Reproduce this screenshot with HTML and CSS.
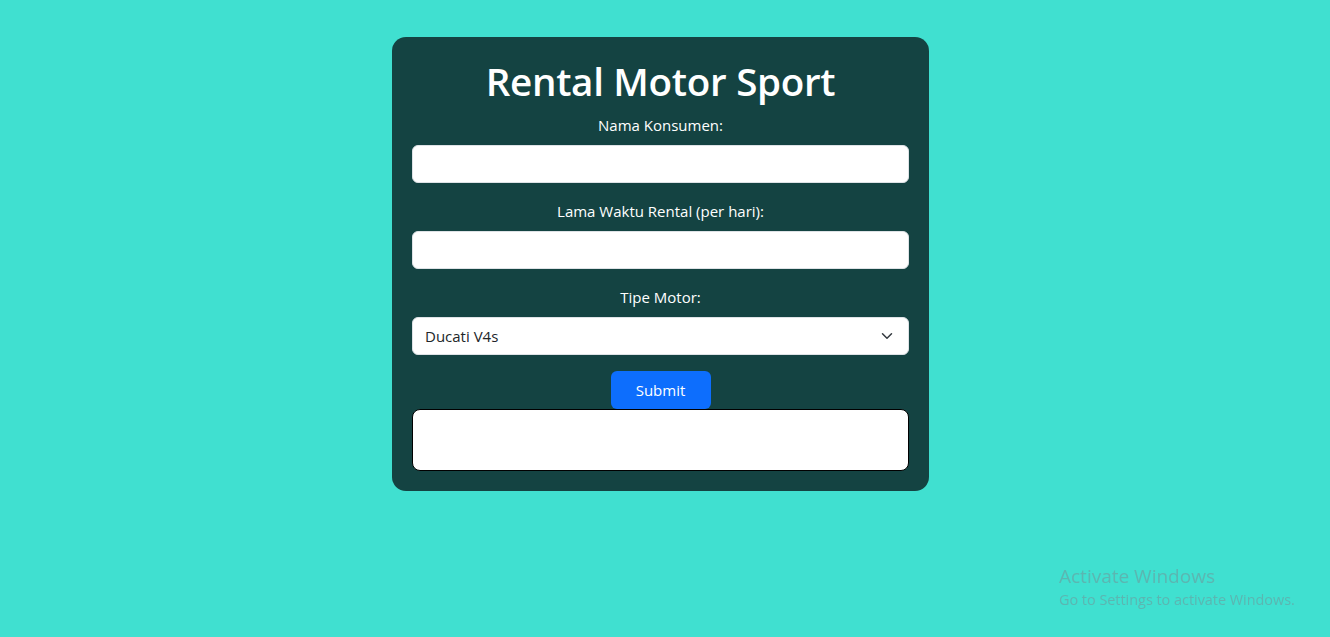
FILE: index.html
```html
<!DOCTYPE html>
<html lang="id">
<head>
<meta charset="utf-8">
<title>Rental Motor Sport</title>
<link rel="stylesheet" href="styles.css">
</head>
<body>
<main class="page">
  <form class="card">
    <h1 class="title">Rental Motor Sport</h1>
    <label class="label" for="nama">Nama Konsumen:</label>
    <input class="field" id="nama" type="text">
    <label class="label" for="lama">Lama Waktu Rental (per hari):</label>
    <input class="field" id="lama" type="text">
    <label class="label" for="tipe">Tipe Motor:</label>
    <div class="select-wrap">
      <select class="field select" id="tipe">
        <option>Ducati V4s</option>
      </select>
      <svg class="chevron" width="16" height="12" viewBox="0 0 16 16" aria-hidden="true"><path d="m2 5 6 6 6-6" fill="none" stroke="#343a40" stroke-width="2" stroke-linecap="round" stroke-linejoin="round"/></svg>
    </div>
    <button class="btn" type="button">Submit</button>
    <div class="output"></div>
  </form>
</main>
<div class="watermark">
  <div class="wm-title">Activate Windows</div>
  <div class="wm-sub">Go to Settings to activate Windows.</div>
</div>
</body>
</html>
```
FILE: styles.css
```css
* { box-sizing: border-box; }
html, body { margin: 0; height: 100%; }
body {
  background: #40e0d0;
  font-family: "Open Sans", "Noto Sans", sans-serif;
  color: #fff;
  overflow: hidden;
}
.page {
  display: flex;
  justify-content: center;
  padding: 37px 9px 0 0;
}
.card {
  width: 537px;
  background: #144342;
  border-radius: 14px;
  padding: 20px;
  display: flex;
  flex-direction: column;
  align-items: center;
}
.title {
  margin: 0 0 8px;
  font-size: 38.6px;
  line-height: 48px;
  font-weight: 600;
  letter-spacing: -0.3px;
}
.label {
  font-size: 15px;
  line-height: 24px;
  margin-bottom: 8px;
}
.field {
  width: 100%;
  height: 38px;
  border: 1px solid #dee2e6;
  border-radius: 6px;
  background: #fff;
  margin: 0 0 16px;
  font-family: inherit;
  font-size: 15px;
  color: #212529;
  padding: 0 12px;
}
.select-wrap {
  position: relative;
  width: 100%;
}
.select {
  appearance: none;
  -webkit-appearance: none;
  display: block;
}
.chevron {
  position: absolute;
  right: 14px;
  top: 13px;
}
.btn {
  width: 100px;
  height: 38px;
  border: 0;
  border-radius: 6px;
  background: #0d6efd;
  color: #fff;
  font-family: inherit;
  font-size: 15px;
}
.output {
  width: 100%;
  height: 62px;
  background: #fff;
  border: 1px solid #000;
  border-radius: 8px;
}
.watermark {
  position: fixed;
  left: 1059px;
  top: 564px;
  color: rgba(125, 130, 140, 0.45);
  font-family: "Open Sans", sans-serif;
}
.wm-title { font-size: 19px; line-height: 25px; }
.wm-sub { font-size: 14.4px; line-height: 22px; }
```
